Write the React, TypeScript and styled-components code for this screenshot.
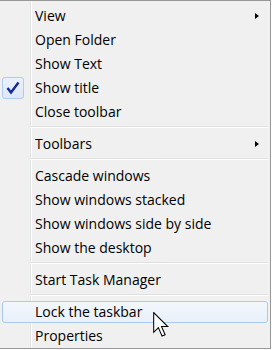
import React, { FC } from "react";
import styled, { createGlobalStyle } from "styled-components";

type Entry =
  | { kind: "item"; label: string; sub?: boolean; checked?: boolean; hot?: boolean }
  | { kind: "sep" };

const entries: Entry[] = [
  { kind: "item", label: "View", sub: true },
  { kind: "item", label: "Open Folder" },
  { kind: "item", label: "Show Text" },
  { kind: "item", label: "Show title", checked: true },
  { kind: "item", label: "Close toolbar" },
  { kind: "sep" },
  { kind: "item", label: "Toolbars", sub: true },
  { kind: "sep" },
  { kind: "item", label: "Cascade windows" },
  { kind: "item", label: "Show windows stacked" },
  { kind: "item", label: "Show windows side by side" },
  { kind: "item", label: "Show the desktop" },
  { kind: "sep" },
  { kind: "item", label: "Start Task Manager" },
  { kind: "sep" },
  { kind: "item", label: "Lock the taskbar", hot: true },
  { kind: "item", label: "Properties" },
];

const App: FC = () => {
  return (
    <>
      <Global />
      <S.Page>
        <S.Menu>
          {entries.map((el, i) =>
            el.kind === "sep" ? (
              <S.Sep key={i} />
            ) : (
              <S.Item key={i} $hot={el.hot}>
                <S.CheckSlot $on={el.checked}>
                  {el.checked && (
                    <svg width="14" height="14" viewBox="0 0 14 14">
                      <path
                        d="M1.5 7 L5 11.5 L12.5 1.5"
                        fill="none"
                        stroke="#15279c"
                        strokeWidth="2.4"
                        strokeLinecap="butt"
                        strokeLinejoin="miter"
                      />
                    </svg>
                  )}
                </S.CheckSlot>
                <S.Label>{el.label}</S.Label>
                {el.sub && <S.Arrow />}
              </S.Item>
            )
          )}
          <S.Cursor width="17" height="25" viewBox="0 0 16 24">
            <path
              d="M0.5 0.5 L0.5 19.5 L5 15 L8.5 23 L11.5 21.8 L8 14 L14 14 Z"
              fill="#fff"
              stroke="#000"
              strokeWidth="1"
              strokeLinejoin="miter"
            />
          </S.Cursor>
        </S.Menu>
      </S.Page>
    </>
  );
};

export default App;

const Global = createGlobalStyle`
  html, body {
    margin: 0;
    padding: 0;
    background: #ffffff;
  }
  body {
    font-family: "Open Sans", "Noto Sans", sans-serif;
  }
`;

const S = {
  Page: styled.div`
    width: 272px;
    height: 350px;
    overflow: hidden;
  `,

  Menu: styled.div`
    position: relative;
    box-sizing: border-box;
    display: flex;
    flex-direction: column;
    width: 271px;
    height: 349px;
    border-top: 1px solid #979797;
    border-right: 1px solid #979797;
    border-bottom: 1px solid #979797;
    padding: 3px 0 0 0;
    background: linear-gradient(
      to right,
      #f0f0f0 30px,
      #e2e3e3 30px,
      #e2e3e3 31px,
      #ffffff 31px,
      #ffffff 32px,
      #f0f0f0 32px
    );
  `,

  Item: styled.div<{ $hot?: boolean }>`
    box-sizing: border-box;
    flex: 0 0 22px;
    display: flex;
    align-items: center;
    height: 22px;
    margin: 1px 2px;
    border: 1px solid ${({ $hot }) => ($hot ? "#a9cbf1" : "transparent")};
    border-radius: 3px;
    background: ${({ $hot }) =>
      $hot ? "linear-gradient(#f3f7fc, #e8f0fa)" : "transparent"};
  `,

  CheckSlot: styled.span<{ $on?: boolean }>`
    box-sizing: border-box;
    flex: 0 0 22px;
    height: 22px;
    margin: -1px 0 -1px -1px;
    display: flex;
    align-items: center;
    justify-content: center;
    border: 1px solid ${({ $on }) => ($on ? "#aecbf0" : "transparent")};
    border-radius: 3px;
    background: ${({ $on }) =>
      $on ? "linear-gradient(#eaf1fb, #dde8f8)" : "transparent"};
  `,

  Label: styled.span`
    flex: 1;
    padding-left: 11px;
    font-size: 14px;
    line-height: 20px;
    color: #000;
    white-space: nowrap;
  `,

  Arrow: styled.span`
    width: 0;
    height: 0;
    margin-right: 8px;
    border-top: 3.5px solid transparent;
    border-bottom: 3.5px solid transparent;
    border-left: 4px solid #000;
  `,

  Sep: styled.div`
    flex: 0 0 1px;
    height: 1px;
    margin: 2px 2px 4px 30px;
    background: #e0e0e0;
    border-bottom: 1px solid #ffffff;
  `,

  Cursor: styled.svg`
    position: absolute;
    left: 153px;
    top: 311px;
  `,
};
